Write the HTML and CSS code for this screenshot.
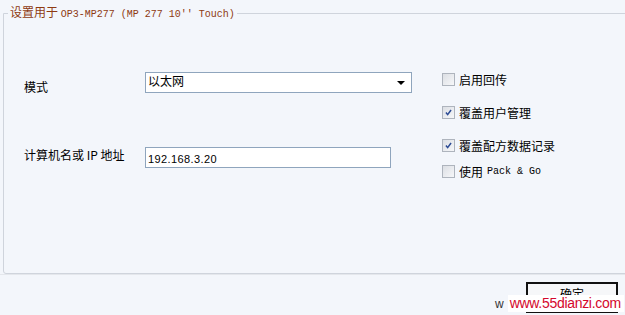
FILE: index.html
```html
<!DOCTYPE html>
<html lang="zh-CN">
<head>
  <meta charset="UTF-8">
  <title>设置用于 OP3-MP277</title>
  <link rel="stylesheet" href="styles.css">
</head>
<body>

  <fieldset class="group">
    <legend>设置用于 <span class="mono">OP3-MP277 (MP 277 10'' Touch)</span></legend>

    <div class="form">
      <div class="fields">
        <div class="row row-mode">
          <label>模式</label>
          <div class="select">以太网<span class="arrow"></span></div>
        </div>
        <div class="row row-ip">
          <label>计算机名或 IP 地址</label>
          <div class="input">192.168.3.20</div>
        </div>
      </div>

      <ul class="options">
        <li><span class="check"></span>启用回传</li>
        <li><span class="check checked"><svg viewBox="0 0 13 13"><path d="M3.5 6.5 L5.5 9 L9.5 3.5" /></svg></span>覆盖用户管理</li>
        <li><span class="check checked"><svg viewBox="0 0 13 13"><path d="M3.5 6.5 L5.5 9 L9.5 3.5" /></svg></span>覆盖配方数据记录</li>
        <li><span class="check"></span>使用 <span class="mono">Pack &amp; Go</span></li>
      </ul>
    </div>
  </fieldset>

  <div class="footer">
    <button class="ok">确定</button>
  </div>

  <div class="watermark">
    <span class="w">w</span>
    <span class="site">www.55dianzi.com</span>
  </div>

</body>
</html>
```

FILE: styles.css
```css
* {
  box-sizing: border-box;
}

body {
  margin: 0;
  width: 625px;
  height: 315px;
  overflow: hidden;
  position: relative;
  background: #f3f6fb;
  font-family: "Noto Sans CJK SC", "DejaVu Sans", sans-serif;
  font-size: 12px;
  line-height: 14px;
  color: #000;
}

.mono {
  font-family: "Liberation Mono", "Noto Sans CJK SC", monospace;
  font-size: 10px;
}

.group {
  margin: 5px -12px 0 3px;
  padding: 50px 0 95px 20px;
  border: 1px solid #cfd4dc;
  border-radius: 0 0 0 3px;
  min-width: 0;
}

.group legend {
  margin-left: -16px;
  padding: 0 2px;
  color: #8e3a12;
  line-height: 14px;
}

.form {
  display: flex;
  align-items: flex-start;
}

.fields {
  width: 418px;
  display: flex;
  flex-direction: column;
  gap: 53px;
}

.row {
  display: flex;
  align-items: flex-start;
}

.row label {
  width: 121px;
  flex-shrink: 0;
}

.row-mode label {
  padding-top: 8px;
}

.row-ip label {
  padding-top: 1px;
}

.select,
.input {
  height: 21px;
  background: #fff;
  border: 1px solid #8fa5bd;
  padding: 1px 2px;
}

.select {
  width: 267px;
  position: relative;
}

.arrow {
  position: absolute;
  right: 6px;
  top: 8px;
  width: 0;
  height: 0;
  border-left: 4px solid transparent;
  border-right: 4px solid transparent;
  border-top: 4px solid #000;
}

.input {
  width: 246px;
  padding-top: 4px;
  font-family: "Liberation Sans", "DejaVu Sans", sans-serif;
  font-size: 11px;
  letter-spacing: 0.4px;
}

.options {
  list-style: none;
  margin: 1px 0 0;
  padding: 0;
  display: flex;
  flex-direction: column;
  gap: 20px;
}

.options li {
  display: flex;
  align-items: center;
  height: 13px;
  gap: 4px;
}

.options li:last-child {
  margin-top: -7px;
}

.check {
  width: 13px;
  height: 13px;
  border: 1px solid #aeb4bd;
  background: linear-gradient(135deg, #dcdfe4, #f6f7f9);
  display: inline-block;
}

.check svg {
  display: block;
  width: 11px;
  height: 11px;
}

.check path {
  fill: none;
  stroke: #2b4a94;
  stroke-width: 1.8;
}

.footer {
  border-top: 1px solid #e4e7ec;
  padding: 7px 7px 0 0;
  display: flex;
  justify-content: flex-end;
}

.ok {
  width: 92px;
  height: 31px;
  border: 2px solid #111;
  background: #f6f7f9;
  font-family: "Noto Sans CJK SC", sans-serif;
  font-size: 12px;
  padding: 0 0 8px;
}

.watermark {
  position: absolute;
  left: 493px;
  top: 295px;
  display: flex;
  align-items: center;
}

.watermark .w {
  font-family: "Liberation Sans", sans-serif;
  font-size: 12px;
  color: #333;
  padding: 0 4px 0 2px;
}

.watermark .site {
  background: #fff;
  padding: 1px 3px 2px 2px;
  font-family: "Liberation Sans", sans-serif;
  font-size: 14px;
  letter-spacing: -0.3px;
  color: #d4072c;
}
```
